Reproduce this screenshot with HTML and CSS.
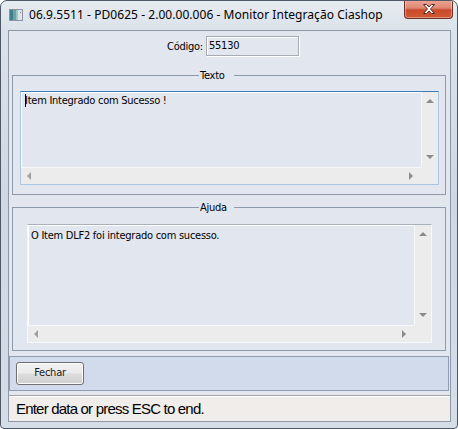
FILE: index.html
```html
<!DOCTYPE html>
<html>
<head>
<meta charset="utf-8">
<link rel="stylesheet" href="styles.css">
</head>
<body>
<div class="window">
  <div class="titlebar">
    <svg class="app-icon" width="14" height="12" viewBox="0 0 14 12">
      <rect x="0.5" y="0.5" width="13" height="11" fill="#f4f6f8" stroke="#8a949e"/>
      <rect x="1" y="1" width="3" height="10" fill="#3f7f8f"/>
      <rect x="4" y="1" width="3" height="10" fill="#67a7a0"/>
      <rect x="7" y="1" width="2" height="10" fill="#9bc7c0"/>
      <rect x="9" y="1" width="4" height="10" fill="#dfe4ea"/>
      <rect x="11" y="3" width="1" height="1" fill="#7c8794"/>
    </svg>
    <span class="title">06.9.5511 - PD0625 - 2.00.00.006 - Monitor Integração Ciashop</span>
    <div class="close-btn">
      <svg width="16" height="12" viewBox="0 0 16 12">
        <path d="M2.5 1.5 L5.5 1.5 L8 4 L10.5 1.5 L13.5 1.5 L9.5 6 L13.5 10.5 L10.5 10.5 L8 8 L5.5 10.5 L2.5 10.5 L6.5 6 Z" fill="#ffffff" stroke="#5a2a22" stroke-width="1" stroke-linejoin="round"/>
      </svg>
    </div>
  </div>
  <div class="client">
    <div class="code-row">
      <span class="label">Código:</span>
      <div class="input">55130</div>
    </div>
    <fieldset class="group group-texto">
      <legend>Texto</legend>
      <div class="textbox textbox-texto">
        <div class="tb-content"><span class="caret"></span>Item Integrado com Sucesso !</div>
        <div class="vscroll">
          <span class="arrow up"></span>
          <span class="arrow down"></span>
        </div>
        <div class="hscroll">
          <span class="arrow left"></span>
          <span class="arrow right"></span>
        </div>
        <div class="corner"></div>
      </div>
    </fieldset>
    <fieldset class="group group-ajuda">
      <legend>Ajuda</legend>
      <div class="textbox textbox-ajuda">
        <div class="tb-content">O Item DLF2 foi integrado com sucesso.</div>
        <div class="vscroll">
          <span class="arrow up"></span>
          <span class="arrow down"></span>
        </div>
        <div class="hscroll">
          <span class="arrow left"></span>
          <span class="arrow right"></span>
        </div>
        <div class="corner"></div>
      </div>
    </fieldset>
    <div class="button-panel">
      <div class="button">Fechar</div>
    </div>
    <div class="statusbar">Enter data or press ESC to end.</div>
  </div>
</div>
</body>
</html>
```
FILE: styles.css
```css
* { box-sizing: border-box; }
html, body { margin: 0; padding: 0; }
body {
  width: 458px;
  height: 429px;
  overflow: hidden;
  background: #ffffff;
}
.window {
  width: 458px;
  height: 429px;
  border: 1px solid #4f5866;
  border-radius: 7px 7px 4px 4px;
  background: linear-gradient(180deg, #e6ebf0 0px, #dbe2ea 30px, #cfd8e3 200px, #d5dde7 429px);
  display: flex;
  flex-direction: column;
  overflow: hidden;
}
.titlebar {
  height: 29px;
  display: flex;
  align-items: flex-start;
  padding-left: 8px;
  padding-right: 4px;
  font-family: "Noto Sans", sans-serif;
  font-size: 12px;
  color: #000;
}
.app-icon {
  margin-top: 8px;
  flex: none;
}
.title {
  margin-left: 6px;
  margin-top: 6px;
  line-height: 16px;
  white-space: nowrap;
  letter-spacing: 0.05px;
}
.close-btn {
  margin-left: auto;
  width: 49px;
  height: 19px;
  margin-top: -1px;
  border: 1px solid #6e3328;
  border-top: none;
  border-radius: 0 0 4px 4px;
  background: linear-gradient(180deg, #eca797 0%, #de8670 45%, #c94a2a 55%, #d35a36 100%);
  box-shadow: inset 0 0 0 1px rgba(255,255,255,0.35);
  display: flex;
  align-items: center;
  justify-content: center;
  flex: none;
}
.client {
  margin: 0 6px 0 7px;
  height: 392px;
  border: 1px solid #8d97a6;
  background: #e2e6ee;
  display: flex;
  flex-direction: column;
  font-family: "DejaVu Sans Condensed", "DejaVu Sans", sans-serif;
  font-size: 11px;
  letter-spacing: -0.25px;
  color: #000;
}
.code-row {
  display: flex;
  align-items: center;
  padding-top: 5px;
  padding-left: 158px;
  height: 25px;
}
.label {
  width: 37px;
  line-height: 13px;
}
.input {
  margin-left: 2px;
  width: 93px;
  height: 20px;
  border: 1px solid #a7abb2;
  box-shadow: inset 1px 1px 0 #ffffff, 1px 1px 0 #ffffff;
  padding-left: 2px;
  line-height: 18px;
  background: #e2e6ee;
}
.group {
  margin: 0 4px 0 3px;
  padding: 0;
  border: 1px solid #8e9aab;
  min-width: 0;
}
.group legend {
  margin-left: 186px;
  width: 35px;
  padding: 0 0 0 1px;
  line-height: 13px;
  font-size: 11px;
}
.group-texto { margin-top: 13px; }
.group-ajuda { margin-top: 6px; }
.textbox {
  display: grid;
  grid-template-columns: 1fr 17px;
  grid-template-rows: 1fr 17px;
  border: 1px solid #a9c7e4;
  background: #e2e6ee;
}
.textbox-texto {
  margin: 9px 6px 9px 7px;
  height: 94px;
  border-top-color: #3d7db5;
  box-shadow: inset 1px 1px 0 #ffffff;
}
.textbox-ajuda {
  margin: 10px 13px 7px 14px;
  height: 119px;
  border-color: #f7f8fa;
  border-top-color: #a9b0ba;
  box-shadow: inset 1px 1px 0 #ffffff;
}
.tb-content {
  padding: 2px 0 0 4px;
  line-height: 13px;
  white-space: nowrap;
}
.textbox-ajuda .tb-content { padding: 4px 0 0 3px; }
.caret {
  display: inline-block;
  width: 1px;
  height: 13px;
  background: #000;
  vertical-align: top;
  margin-right: -1px;
}
.vscroll {
  background: #ececec;
  border-left: 1px solid #f8f8f8;
  display: flex;
  flex-direction: column;
  justify-content: space-between;
  align-items: center;
  padding: 7px 0 8px;
}
.hscroll {
  background: #ececec;
  border-top: 1px solid #f8f8f8;
  display: flex;
  justify-content: space-between;
  align-items: center;
  padding: 0 8px 0 6px;
}
.corner { background: #ececec; }
.arrow {
  width: 0;
  height: 0;
  display: block;
}
.arrow.up {
  border-left: 4px solid transparent;
  border-right: 4px solid transparent;
  border-bottom: 4px solid #8c8c8c;
}
.arrow.down {
  border-left: 4px solid transparent;
  border-right: 4px solid transparent;
  border-top: 4px solid #8c8c8c;
}
.arrow.left {
  border-top: 4px solid transparent;
  border-bottom: 4px solid transparent;
  border-right: 4px solid #a0a0a0;
}
.arrow.right {
  border-top: 4px solid transparent;
  border-bottom: 4px solid transparent;
  border-left: 4px solid #8c8c8c;
}
.button-panel {
  margin: 5px 1px 0 0;
  height: 35px;
  border: 1px solid #8f9db2;
  background: #d2dbec;
  padding: 5px 0 0 6px;
}
.button {
  width: 68px;
  height: 23px;
  border: 1px solid #707070;
  border-radius: 3px;
  background: linear-gradient(180deg, #f2f2f2 0%, #ebebeb 48%, #dddddd 52%, #cfcfcf 100%);
  box-shadow: inset 0 0 0 1px #fcfcfc;
  text-align: center;
  line-height: 20px;
  color: #1a1a1a;
}
.statusbar {
  margin-top: auto;
  height: 26px;
  border-top: 1px solid #a3a3a3;
  box-shadow: inset 0 1px 0 #ffffff;
  background: #f0edeb;
  font-family: "Liberation Sans", Arial, sans-serif;
  font-size: 15px;
  letter-spacing: -0.8px;
  line-height: 25px;
  padding-left: 7px;
  color: #000;
}
```
